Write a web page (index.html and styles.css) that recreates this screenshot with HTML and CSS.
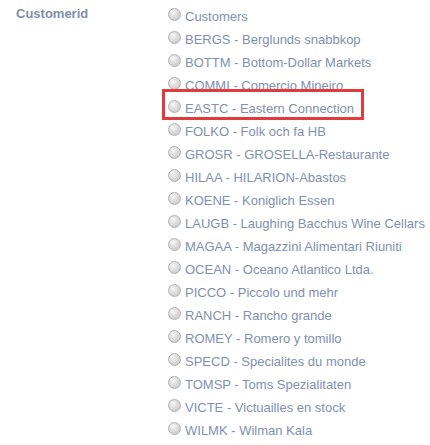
FILE: index.html
```html
<!DOCTYPE html>
<html>
<head>
<meta charset="utf-8">
<link rel="stylesheet" href="styles.css">
</head>
<body>
<div class="form-row">
  <div class="field-label">Customerid</div>
  <div class="options">
    <label class="opt"><span class="radio"></span><span class="txt">Customers</span></label>
    <label class="opt"><span class="radio"></span><span class="txt">BERGS - Berglunds snabbkop</span></label>
    <label class="opt"><span class="radio"></span><span class="txt">BOTTM - Bottom-Dollar Markets</span></label>
    <label class="opt"><span class="radio"></span><span class="txt">COMMI - Comercio Mineiro</span></label>
    <label class="opt highlighted"><span class="radio"></span><span class="txt">EASTC - Eastern Connection</span></label>
    <label class="opt"><span class="radio"></span><span class="txt">FOLKO - Folk och fa HB</span></label>
    <label class="opt"><span class="radio"></span><span class="txt">GROSR - GROSELLA-Restaurante</span></label>
    <label class="opt"><span class="radio"></span><span class="txt">HILAA - HILARION-Abastos</span></label>
    <label class="opt"><span class="radio"></span><span class="txt">KOENE - Koniglich Essen</span></label>
    <label class="opt"><span class="radio"></span><span class="txt">LAUGB - Laughing Bacchus Wine Cellars</span></label>
    <label class="opt"><span class="radio"></span><span class="txt">MAGAA - Magazzini Alimentari Riuniti</span></label>
    <label class="opt"><span class="radio"></span><span class="txt">OCEAN - Oceano Atlantico Ltda.</span></label>
    <label class="opt"><span class="radio"></span><span class="txt">PICCO - Piccolo und mehr</span></label>
    <label class="opt"><span class="radio"></span><span class="txt">RANCH - Rancho grande</span></label>
    <label class="opt"><span class="radio"></span><span class="txt">ROMEY - Romero y tomillo</span></label>
    <label class="opt"><span class="radio"></span><span class="txt">SPECD - Specialites du monde</span></label>
    <label class="opt"><span class="radio"></span><span class="txt">TOMSP - Toms Spezialitaten</span></label>
    <label class="opt"><span class="radio"></span><span class="txt">VICTE - Victuailles en stock</span></label>
    <label class="opt"><span class="radio"></span><span class="txt">WILMK - Wilman Kala</span></label>
  </div>
</div>
</body>
</html>
```

FILE: styles.css
```css
html, body {
  margin: 0;
  padding: 0;
  background: #ffffff;
}

body {
  font-family: "Liberation Sans", Arial, sans-serif;
  font-size: 13px;
  color: #7f91ae;
  padding: 5px 0 0 16px;
}

.form-row {
  display: grid;
  grid-template-columns: 152px 1fr;
}

.field-label {
  font-weight: bold;
  line-height: 17px;
  color: #808fa8;
}

.options {
  display: flex;
  flex-direction: column;
}

.opt {
  display: flex;
  align-items: flex-start;
  height: 23px;
  line-height: 23px;
  white-space: nowrap;
}

.radio {
  flex: 0 0 auto;
  box-sizing: border-box;
  width: 13px;
  height: 13px;
  margin-top: 3px;
  margin-right: 4px;
  border-radius: 50%;
  border: 1px solid #b3b3b3;
  background: radial-gradient(circle at 38% 32%, #f8f8f8 0%, #e2e2e2 35%, #d0d0d0 70%, #c6c6c6 100%);
}

.txt {
  display: block;
}

.highlighted {
  position: relative;
}

.highlighted::after {
  content: "";
  position: absolute;
  left: -6px;
  top: -8px;
  width: 202px;
  height: 31px;
  box-sizing: border-box;
  border: 3px solid #e23b3b;
  pointer-events: none;
}
```
